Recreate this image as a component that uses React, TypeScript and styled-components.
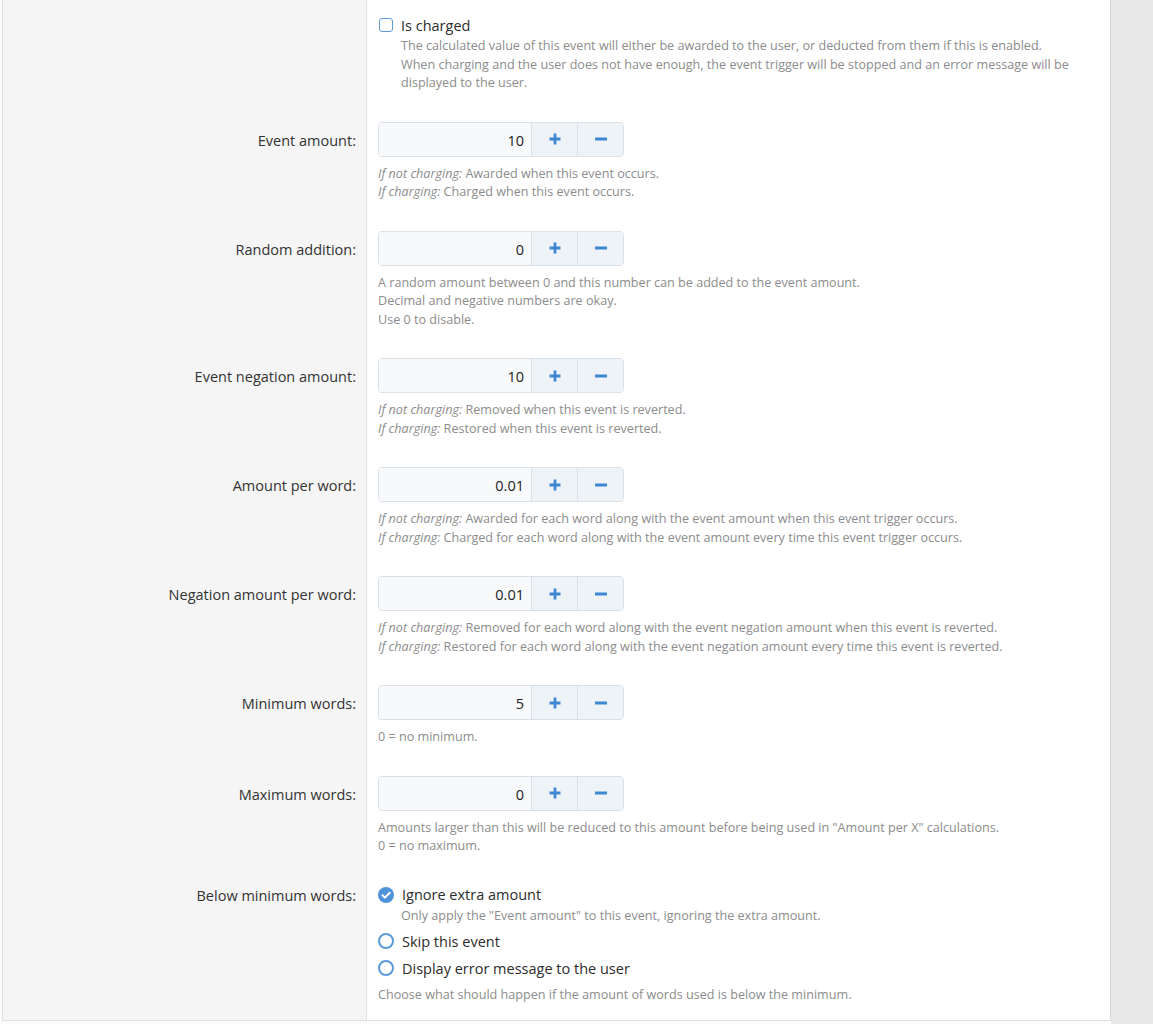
import React from "react";
import styled, { createGlobalStyle } from "styled-components";

const Global = createGlobalStyle`
  html, body { margin: 0; padding: 0; }
  body {
    font-family: "Open Sans", "Noto Sans", "Liberation Sans", sans-serif;
    background: #fbfbfb;
    color: #2c2c2c;
  }
`;

const Page = styled.div`
  display: flex;
  min-height: 1024px;
`;

const Main = styled.div`
  width: 1111px;
  padding-left: 2px;
  box-sizing: border-box;
  background: #fbfbfb;
`;

const Side = styled.div`
  flex: 1;
  background: #e8e8e8;
`;

const Form = styled.div`
  border-left: 1px solid #dedede;
  border-right: 1px solid #d6d6d6;
  border-bottom: 1px solid #dedede;
  background: #fff;
`;

const Row = styled.div`
  display: grid;
  grid-template-columns: 364px 1fr;
`;

const LabelCell = styled.div`
  background: #f5f5f5;
  border-right: 1px solid #e2e2e2;
  padding: 15px 10px 14px 0;
  display: flex;
  justify-content: flex-end;
  align-items: flex-start;
`;

const LabelText = styled.div<{ $tall?: boolean }>`
  font-size: 14.5px;
  line-height: 20px;
  color: #333;
  height: ${(p) => (p.$tall ? "35px" : "20px")};
  padding-top: ${(p) => (p.$tall ? "3px" : "2px")};
  box-sizing: border-box;
  display: flex;
  align-items: center;
`;

const FieldCell = styled.div<{ $last?: boolean }>`
  padding: 15px 20px ${(p) => (p.$last ? "15px" : "14px")} 11px;
  display: flex;
  flex-direction: column;
`;

const Stepper = styled.div`
  display: flex;
  width: 246px;
  height: 35px;
  box-sizing: border-box;
  border: 1px solid #d9e0e7;
  border-radius: 4px;
  overflow: hidden;
  margin-bottom: 8px;
`;

const NumberInput = styled.div`
  flex: 1;
  background: #f7f9fb;
  display: flex;
  align-items: center;
  justify-content: flex-end;
  padding: 2px 7px 0 0;
  font-size: 14.5px;
  color: #222;
`;

const StepButton = styled.div`
  width: 45px;
  background: #eef3f8;
  border-left: 1px solid #d9e0e7;
  display: flex;
  align-items: center;
  justify-content: center;
`;

const Desc = styled.div<{ $indent?: boolean; $top?: number }>`
  font-size: 12.6px;
  line-height: 18.5px;
  color: #8c8c8c;
  padding-left: ${(p) => (p.$indent ? "23px" : "0")};
  margin-top: ${(p) => p.$top ?? 0}px;
  em { font-style: italic; }
`;

const Option = styled.div<{ $top?: number }>`
  display: flex;
  align-items: center;
  gap: 8px;
  height: 20px;
  margin-top: ${(p) => p.$top ?? 0}px;
  font-size: 14.5px;
  color: #2c2c2c;
`;

const CheckBox = styled.span`
  width: 14px;
  height: 14px;
  box-sizing: border-box;
  border: 1.5px solid #5d9ad8;
  border-radius: 3px;
  background: #fff;
  margin-left: 1px;
`;

const RadioRing = styled.span`
  width: 16px;
  height: 16px;
  box-sizing: border-box;
  border: 2px solid #5d9ad8;
  border-radius: 50%;
  background: #fff;
`;

const Plus = () => (
  <svg width="12" height="12" viewBox="0 0 12 12">
    <path d="M6 0.5v11M0.5 6h11" stroke="#3e88d3" strokeWidth="2.8" />
  </svg>
);

const Minus = () => (
  <svg width="12" height="4" viewBox="0 0 12 4">
    <path d="M0 2h12" stroke="#3e88d3" strokeWidth="2.8" />
  </svg>
);

const RadioChecked = () => (
  <svg width="16" height="16" viewBox="0 0 16 16">
    <circle cx="8" cy="8" r="8" fill="#4f93d8" />
    <path d="M4.4 8.2l2.5 2.4 4.8-4.9" stroke="#fff" strokeWidth="2" fill="none" strokeLinecap="round" strokeLinejoin="round" />
  </svg>
);

type NumField = {
  label: string;
  value: string;
  desc: React.ReactNode[];
};

const fields: NumField[] = [
  {
    label: "Event amount:",
    value: "10",
    desc: [
      <><em>If not charging:</em> Awarded when this event occurs.</>,
      <><em>If charging:</em> Charged when this event occurs.</>,
    ],
  },
  {
    label: "Random addition:",
    value: "0",
    desc: [
      "A random amount between 0 and this number can be added to the event amount.",
      "Decimal and negative numbers are okay.",
      "Use 0 to disable.",
    ],
  },
  {
    label: "Event negation amount:",
    value: "10",
    desc: [
      <><em>If not charging:</em> Removed when this event is reverted.</>,
      <><em>If charging:</em> Restored when this event is reverted.</>,
    ],
  },
  {
    label: "Amount per word:",
    value: "0.01",
    desc: [
      <><em>If not charging:</em> Awarded for each word along with the event amount when this event trigger occurs.</>,
      <><em>If charging:</em> Charged for each word along with the event amount every time this event trigger occurs.</>,
    ],
  },
  {
    label: "Negation amount per word:",
    value: "0.01",
    desc: [
      <><em>If not charging:</em> Removed for each word along with the event negation amount when this event is reverted.</>,
      <><em>If charging:</em> Restored for each word along with the event negation amount every time this event is reverted.</>,
    ],
  },
  {
    label: "Minimum words:",
    value: "5",
    desc: ["0 = no minimum."],
  },
  {
    label: "Maximum words:",
    value: "0",
    desc: [
      'Amounts larger than this will be reduced to this amount before being used in "Amount per X" calculations.',
      "0 = no maximum.",
    ],
  },
];

export default function App() {
  return (
    <>
      <Global />
      <Page>
        <Main>
          <Form>
            <Row>
              <LabelCell />
              <FieldCell>
                <Option>
                  <CheckBox />
                  <span>Is charged</span>
                </Option>
                <Desc $indent $top={2}>
                  The calculated value of this event will either be awarded to the user, or deducted from them if this is enabled.
                  <br />
                  When charging and the user does not have enough, the event trigger will be stopped and an error message will be
                  <br />
                  displayed to the user.
                </Desc>
              </FieldCell>
            </Row>
            {fields.map((f) => (
              <Row key={f.label}>
                <LabelCell>
                  <LabelText $tall>{f.label}</LabelText>
                </LabelCell>
                <FieldCell>
                  <Stepper>
                    <NumberInput>{f.value}</NumberInput>
                    <StepButton>
                      <Plus />
                    </StepButton>
                    <StepButton>
                      <Minus />
                    </StepButton>
                  </Stepper>
                  {f.desc.map((d, i) => (
                    <Desc key={i}>{d}</Desc>
                  ))}
                </FieldCell>
              </Row>
            ))}
            <Row>
              <LabelCell>
                <LabelText>Below minimum words:</LabelText>
              </LabelCell>
              <FieldCell $last>
                <Option>
                  <RadioChecked />
                  <span>Ignore extra amount</span>
                </Option>
                <Desc $indent $top={2}>Only apply the "Event amount" to this event, ignoring the extra amount.</Desc>
                <Option $top={6}>
                  <RadioRing />
                  <span>Skip this event</span>
                </Option>
                <Option $top={7}>
                  <RadioRing />
                  <span>Display error message to the user</span>
                </Option>
                <Desc $top={8}>Choose what should happen if the amount of words used is below the minimum.</Desc>
              </FieldCell>
            </Row>
          </Form>
        </Main>
        <Side />
      </Page>
    </>
  );
}
